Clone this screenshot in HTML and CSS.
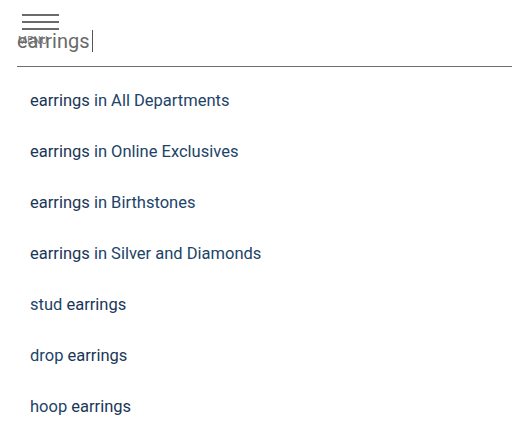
FILE: index.html
```html
<!DOCTYPE html>
<html>
<head>
<meta charset="utf-8">
<link rel="stylesheet" href="styles.css">
</head>
<body>
<div class="search">
  <div class="menu-btn">
    <span class="bar"></span>
    <span class="bar"></span>
    <span class="bar"></span>
    <span class="menu-label">MENU</span>
  </div>
  <div class="query">earrings<span class="caret"></span></div>
</div>
<ul class="suggestions">
  <li><span class="term">earrings</span> in All Departments</li>
  <li><span class="term">earrings</span> in Online Exclusives</li>
  <li><span class="term">earrings</span> in Birthstones</li>
  <li><span class="term">earrings</span> in Silver and Diamonds</li>
  <li>stud <span class="term">earrings</span></li>
  <li>drop <span class="term">earrings</span></li>
  <li>hoop <span class="term">earrings</span></li>
</ul>
</body>
</html>
```
FILE: styles.css
```css
html, body {
  margin: 0;
  padding: 0;
  background: #fff;
  font-family: Roboto, "Liberation Sans", sans-serif;
}
.search {
  position: relative;
  margin-left: 17px;
  height: 66px;
  border-bottom: 1px solid #6f6f6f;
}
.menu-btn {
  position: absolute;
  left: 5px;
  top: 14px;
  width: 37px;
}
.bar {
  display: block;
  height: 2px;
  background: #6b6b6b;
  margin-bottom: 5px;
}
.menu-label {
  display: block;
  font-size: 10px;
  color: #777;
  margin-left: -4px;
  margin-top: 2px;
  letter-spacing: 0.5px;
}
.query {
  position: relative;
  padding-top: 29px;
  font-size: 20px;
  line-height: 24px;
  color: #6a6a6a;
  display: flex;
  align-items: center;
}
.caret {
  display: inline-block;
  width: 1px;
  height: 22px;
  background: #555;
  margin-left: 2px;
}
.suggestions {
  list-style: none;
  margin: 8px 0 0;
  padding: 0 0 0 30px;
}
.suggestions li {
  height: 51px;
  line-height: 51px;
  font-size: 16.5px;
  color: #1c4468;
}
.term {
  color: #1a3656;
}
```
